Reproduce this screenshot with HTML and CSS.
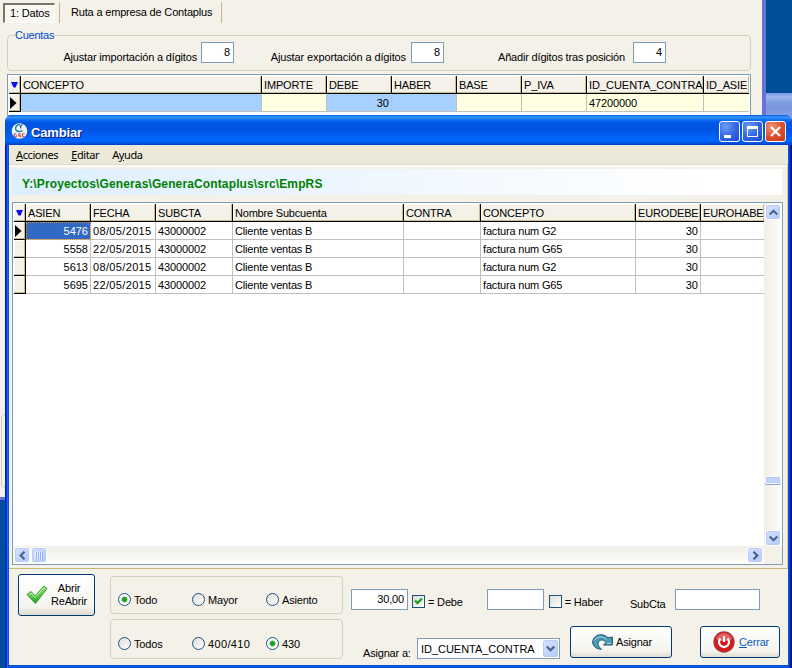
FILE: index.html
```html
<!DOCTYPE html>
<html lang="es">
<head>
<meta charset="utf-8">
<title>Cambiar</title>
<link rel="stylesheet" href="styles.css">
</head>
<body>
<div class="desktop">
  <div class="inactive-window"></div>

  <section class="back-window">
    <nav class="tabs">
      <span class="tab tab-active">1: Datos</span>
      <span class="tab tab-second">Ruta a empresa de Contaplus</span>
    </nav>
    <div class="cuentas">
      <span class="legend">Cuentas</span>
      <label class="field"><span>Ajustar importación a dígitos</span><b class="box">8</b></label>
      <label class="field"><span>Ajustar exportación a dígitos</span><b class="box">8</b></label>
      <label class="field"><span>Añadir dígitos tras posición</span><b class="box">4</b></label>
    </div>
    <div class="table table-top">
      <div class="row head cols-top">
        <span class="mark"><svg width="7" height="6"><path d="M0 0H7L4.500 5.500H2.500Z" fill="#0a0af0"/></svg></span>
        <span>CONCEPTO</span><span>IMPORTE</span><span>DEBE</span><span>HABER</span><span>BASE</span><span>P_IVA</span><span class="caps-wide">ID_CUENTA_CONTRA</span><span>ID_ASIE</span>
      </div>
      <div class="row cols-top tint">
        <span class="mark"><svg width="7" height="12"><path d="M0 0L6.500 6L0 12Z"/></svg></span>
        <span class="blue"></span><span></span><span class="blue num last-blue">30</span><span class="blue"></span><span></span><span></span><span class="digits">47200000</span><span></span>
      </div>
    </div>
    <div class="hidden-group"></div>
  </section>

  <section class="dialog">
    <header class="titlebar">
      <svg class="app-icon" width="17" height="17" viewBox="0 0 17 17"><circle cx="8.500" cy="8" r="7.800" fill="#f1f4f6"/><path d="M9 1.500C5.500 2 3.500 4.500 5 7c1.300 2 4.500 2 6.500.5" fill="none" stroke="#1686a8" stroke-width="1.500"/><path d="M11.500 1.500c-2 1-2.500 2.500-1.500 4" fill="none" stroke="#17449b" stroke-width="1.200"/><path d="M5.500 10.800H3.300v3h2.200v-1.500M9.700 10.800H7.500v1.500h2.200v1.500H7.500M13.700 10.800h-2.200v3h2.200" fill="none" stroke="#c04848" stroke-width="1"/></svg>
      <h1>Cambiar</h1>
      <span class="cap"><svg width="21" height="21"><path d="M5 14h7v3H5z" fill="#fff"/></svg></span>
      <span class="cap"><svg width="21" height="21"><path d="M5.500 5.500h10v10h-10z" fill="none" stroke="#fff"/><path d="M5 5h11v3H5z" fill="#fff"/></svg></span>
      <span class="cap cap-close"><svg width="21" height="21"><path d="M6 6l9 9M15 6l-9 9" stroke="#fff" stroke-width="2.200"/></svg></span>
    </header>
    <nav class="menu"><span><u>A</u>cciones</span><span><u>E</u>ditar</span><span>A<u>y</u>uda</span></nav>

    <div class="content">
      <div class="path">Y:\Proyectos\Generas\GeneraContaplus\src\EmpRS</div>
      <div class="table table-main">
        <div class="rows">
          <div class="row head cols-main">
            <span class="mark"><svg width="7" height="6"><path d="M0 0H7L4.500 5.500H2.500Z" fill="#0a0af0"/></svg></span>
            <span>ASIEN</span><span>FECHA</span><span>SUBCTA</span><span class="prose">Nombre Subcuenta</span><span>CONTRA</span><span>CONCEPTO</span><span>EURODEBE</span><span>EUROHABE</span>
          </div>
          <div class="row cols-main">
            <span class="mark"><svg width="7" height="12"><path d="M0 0L6.500 6L0 12Z"/></svg></span>
            <span class="num selected">5476</span><span class="date">08/05/2015</span><span class="digits">43000002</span><span>Cliente ventas B</span><span></span><span>factura num G2</span><span class="num">30</span><span></span>
          </div>
          <div class="row cols-main">
            <span class="mark"></span>
            <span class="num">5558</span><span class="date">22/05/2015</span><span class="digits">43000002</span><span>Cliente ventas B</span><span></span><span>factura num G65</span><span class="num">30</span><span></span>
          </div>
          <div class="row cols-main">
            <span class="mark"></span>
            <span class="num">5613</span><span class="date">08/05/2015</span><span class="digits">43000002</span><span>Cliente ventas B</span><span></span><span>factura num G2</span><span class="num">30</span><span></span>
          </div>
          <div class="row cols-main">
            <span class="mark"></span>
            <span class="num">5695</span><span class="date">22/05/2015</span><span class="digits">43000002</span><span>Cliente ventas B</span><span></span><span>factura num G65</span><span class="num">30</span><span></span>
          </div>
        </div>
        <div class="vscroll">
          <span class="sb"><svg width="9" height="7"><path d="M.7 5.500L4.500 1.700L8.300 5.500" /></svg></span>
          <span class="vthumb"></span>
          <span class="sb sb-end"><svg width="9" height="7"><path d="M.7 1.500L4.500 5.300L8.300 1.500" /></svg></span>
        </div>
        <div class="hscroll">
          <span class="sb"><svg width="7" height="9"><path d="M5.500 .7L1.700 4.500L5.500 8.300" /></svg></span>
          <span class="sb hthumb"><i></i></span>
          <span class="sb sb-end"><svg width="7" height="9"><path d="M1.500 .7L5.300 4.500L1.500 8.300" /></svg></span>
        </div>
      </div>
    </div>

    <footer class="panel">
      <button class="btn btn-open">
        <svg width="22" height="20" viewBox="0 0 22 20"><defs><linearGradient id="g" x1="0" y1="0" x2="0" y2="1"><stop offset="0" stop-color="#9be86a"/><stop offset="1" stop-color="#1fa82a"/></linearGradient></defs><path d="M1 9.500L5 6.500L9 11L18 1L21 3.500L9.500 18.500Z" fill="url(#g)" stroke="#3c9440"/><path d="M3 9.500L5 8L9 12.500L18 2.500" fill="none" stroke="#c9f5b0"/></svg>
        <span>Abrir<br>ReAbrir</span>
      </button>
      <div class="groups">
        <div class="group group-a"><label class="opt on"><i></i>Todo</label><label class="opt"><i></i>Mayor</label><label class="opt"><i></i>Asiento</label></div>
        <div class="group group-b"><label class="opt"><i></i>Todos</label><label class="opt"><i></i><span class="date">400/410</span></label><label class="opt on"><i></i>430</label></div>
      </div>
      <div class="controls">
        <div class="line line-a">
          <b class="box amount">30,00</b>
          <label class="check"><i><svg width="9" height="9"><path d="M1 3.500L3.500 6L8 1.500" fill="none" stroke="#21a121" stroke-width="2.400"/></svg></i>= Debe</label>
          <b class="box second"></b>
          <label class="check check-off"><i></i>= Haber</label>
          <span class="sub">SubCta</span>
          <b class="box third"></b>
        </div>
        <div class="line line-b">
          <span class="assign">Asignar a:</span>
          <span class="select"><span class="caps-wide">ID_CUENTA_CONTRA</span><span class="sb"><svg width="9" height="7"><path d="M.7 1.500L4.500 5.300L8.300 1.500" /></svg></span></span>
          <button class="btn btn-assign"><svg width="21" height="16" viewBox="0 0 21 16"><path d="M.7 8C1 3.500 4.500 .8 9 .8c3 0 5.200 1.200 6.800 3.200L20.300 3V11H11.500l2.700-2.500C12 5.500 8.500 5.200 6.800 7.500c-1.500 2.300-.3 5.500 2.700 7.800C4.500 15 .5 12 .7 8Z" fill="#4e9cb4" stroke="#17506e"/><path d="M2.500 6.500C5 2.300 10 1.300 14.500 5.500M15 9.500h4" fill="none" stroke="#a5d5e3"/></svg><span>Asignar</span></button>
          <button class="btn btn-close"><svg width="22" height="22" viewBox="0 0 22 22"><circle cx="11" cy="11" r="10" fill="#d8181c" stroke="#a53535" stroke-width="1.300"/><path d="M3 8a8.500 8.500 0 0 1 16 0c-5 3-11 3-16 0Z" fill="#f08888" opacity=".65"/><path d="M7.500 7.500a5 5 0 1 0 7 0M11 5v6" fill="none" stroke="#fff" stroke-width="2.200"/></svg><span><u>C</u>errar</span></button>
        </div>
      </div>
    </footer>
  </section>
</div>
</body>
</html>
```
FILE: styles.css
```css
* { box-sizing: border-box; }
body { margin: 0; font: 11px/17px "Liberation Sans", Arial, sans-serif; letter-spacing: -0.18px; color: #000; }
svg { display: block; }
b, i { font-weight: normal; font-style: normal; }
.desktop { position: relative; width: 792px; height: 668px; overflow: hidden; background: #004e98; }

.inactive-window { position: absolute; left: 766px; top: 93px; width: 26px; height: 60px; background: linear-gradient(#7b9be4, #9db4f0 4px, #809de0 9px, #7d97df 16px, #91a9e8 30px); }

/* window behind the dialog */
.back-window { position: absolute; left: 0; top: 0; width: 766px; height: 500px; background: #f4f1e8; border-right: 4px solid #6674d5; border-bottom: 3px solid #6070d0; }
.tabs { display: flex; height: 24px; padding: 3px 0 0 3px; }
.tab { height: 20px; line-height: 19px; }
.tab-active { width: 52px; padding-left: 5px; border: 1px solid #fff; border-top: 2px solid #77746a; border-left: 2px solid #77746a; background: #f9f7f2; line-height: 17px; }
.tab-second { width: 163px; height: 21px; margin: -1px 0 0 4px; padding-left: 11px; border-left: 1px solid #c1b589; border-right: 1px solid #c1b589; line-height: 20px; }

.cuentas { position: relative; display: grid; grid-template-columns: 226px 210px 223px; width: 744px; height: 36px; margin: 11px 0 0 7px; border: 1px solid #d0d0bf; border-radius: 4px; }
.legend { position: absolute; left: 7px; top: -9px; background: #f4f1e8; color: #0046d5; letter-spacing: -0.25px; }
.field { display: flex; justify-content: flex-end; gap: 4px; padding-top: 6px; }
.field span { padding-top: 7px; white-space: nowrap; }
.field:nth-of-type(2) { gap: 5px; letter-spacing: -0.12px; }
.field:nth-of-type(3) { gap: 8px; padding-right: 1px; }
.box { width: 33px; height: 21px; padding-right: 3px; background: #fff; border: 1px solid #7f9db9; text-align: right; line-height: 18px; }
.field .box { flex: none; }
.hidden-group { width: 20px; height: 74px; margin: 298px 0 0 1px; border: 1px solid #d0d0bf; border-radius: 4px; }

/* data grids */
.table { background: #fff; border: 1px solid #7f9db9; }
.table-top { width: 744px; height: 42px; margin: 3px 0 0 7px; padding: 1px; }
.row { display: grid; height: 18px; }
.row > span { overflow: hidden; padding-left: 2px; border-right: 1px solid #c0c0c0; border-bottom: 1px solid #c0c0c0; white-space: nowrap; line-height: 18px; }
.head > span { background: #f4f1e8; border-color: #000; box-shadow: inset -1px -1px #c9bd92, inset 1px 1px #fff; letter-spacing: -0.15px; line-height: 18px; }
.row > .mark { display: flex; align-items: center; justify-content: center; padding: 0 2px 0 0; background: #f4f1e8; border-color: #000; box-shadow: inset -1px -1px #c9bd92, inset 1px 1px #fff; }
.head > .mark { padding: 0; }
.row > span:last-child { border-right: 0; }
.cols-top { grid-template-columns: 12px 241px 65px 65px 65px 65px 65px 117px 45px; }
.cols-main { grid-template-columns: 12px 65px 65px 77px 171px 77px 155px 65px 63px; }
.tint > span { background-color: #ffffe1; }
.tint > .blue { background: #a6d0ff; }
.row > .num { padding: 0 2px 0 0; text-align: right; letter-spacing: 0; }
.row > .last-blue { border-right-color: #b5c4d8; }
.caps-wide, .head > .caps-wide { letter-spacing: -0.03px; }
.date { letter-spacing: 0.35px; }
.digits { letter-spacing: -0.1px; }
.head > .prose { letter-spacing: -0.2px; }
.row > .selected { background: #316ac5; color: #fff; outline: 1px dotted #e08a28; outline-offset: -1px; }

/* dialog */
.dialog { position: absolute; left: 5px; top: 115px; width: 787px; height: 553px; padding: 0 4px 3px; border-radius: 7px 7px 0 0; background: linear-gradient(90deg, #0019cf 0 1px, #0831d9 1px 2px, #166aee 2px 3px, #0855dd 3px 4px, #0855dd 4px 783px, #0855dd 783px 784px, #0441d8 784px 785px, #001ea0 785px 786px, #00138c 786px); }
.titlebar { display: flex; align-items: flex-start; height: 30px; margin: 0 -4px; padding: 6px 6px 0; border-radius: 7px 7px 0 0; background: linear-gradient(#0058e6 0, #3a93ff 2px, #288eff 3px, #0c6cf0 5px, #0055e5 8px, #0054e3 15px, #0060f5 21px, #0066ff 26px, #005df0 27px, #003dc0 30px); }
.app-icon { margin-top: 2px; }
.titlebar h1 { flex: 1; margin: 3px 0 0 3px; color: #fff; font: bold 13px/17px "Liberation Sans", Arial, sans-serif; letter-spacing: -0.15px; text-shadow: 1px 1px #0a1883; }
.cap { width: 21px; height: 21px; margin-left: 2px; border: 1px solid #fff; border-radius: 3px; background: radial-gradient(circle at 30% 25%, #6d9cf5, #3468e0 50%, #1d49cf); }
.cap svg { margin: -1px; }
.cap-close { background: radial-gradient(circle at 30% 25%, #f0957a, #dd5030 50%, #c33818); }
.menu { display: flex; gap: 13px; height: 19px; padding: 1px 7px 0; background: #ece9d8; font: 11px/17px "Noto Sans", Tahoma, sans-serif; letter-spacing: -0.4px; }
.content { height: 405px; padding: 4px 5px 0 3px; background: #f4f1e8; border-top: 1px solid #dedac8; border-bottom: 1px solid #c5b67c; border-right: 1px solid #d4c9a0; box-shadow: inset 0 2px #fcfbf7; }
.path { height: 26px; padding-left: 10px; background: linear-gradient(90deg, #ddeeff, #fff 90%); color: #008000; font: bold 12px/31px "Liberation Sans", Arial, sans-serif; letter-spacing: 0.13px; }
.table-main { display: grid; grid-template: 343px 18px / 751px 18px; width: 771px; height: 363px; margin-top: 7px; overflow: hidden; background: linear-gradient(#f4f1e8, #f4f1e8) 100% 100% / 18px 18px no-repeat #fff; }
.rows { padding: 1px 0 0 1px; }
.vscroll, .hscroll { display: flex; }
.vscroll { flex-direction: column; padding: 1px 1px 0; background: linear-gradient(90deg, #efeee6, #fefefb); }
.hscroll { gap: 1px; padding: 1px 0 1px 1px; background: linear-gradient(#efeee6, #fefefb); }
.sb { display: flex; flex: none; align-items: center; justify-content: center; width: 16px; height: 16px; border: 1px solid #fff; border-radius: 3px; background: linear-gradient(135deg, #d6e2ff, #b3c9fa); box-shadow: inset 0 0 0 1px #b9cbf3; }
.sb path { fill: none; stroke: #4d6185; stroke-width: 2.200; }
.vscroll .sb-end { margin-top: auto; }
.hscroll .sb-end { margin-left: auto; margin-right: 1px; }
.vthumb { height: 8px; margin-top: 256px; border: 1px solid #fff; border-radius: 2px; background: #c2d3fc; box-shadow: inset 0 0 0 1px #b5c8f5, 0 1px #85a4d8; }
.hthumb i { width: 8px; height: 7px; background: repeating-linear-gradient(90deg, #eef4ff 0 1px, #8cb0f8 1px 2px); }

/* bottom panel */
.panel { display: flex; height: 96px; padding-left: 9px; background: #f4f1e8; }
.btn { display: flex; align-items: center; padding: 0; border: 1px solid #003c74; border-radius: 3px; background: linear-gradient(#fff, #f4f3ee 80%, #dfdbd0); color: #000; font: inherit; letter-spacing: inherit; }
.btn-open { width: 77px; height: 42px; margin-top: 5px; padding-left: 7px; line-height: 13px; }
.btn-open span { width: 38px; margin-left: 2px; text-align: center; white-space: nowrap; }
.groups { width: 233px; margin-left: 15px; padding-top: 7px; }
.group { display: grid; grid-template-columns: 74px 74px 1fr; padding-left: 7px; border: 1px solid #d0d0bf; border-radius: 4px; }
.group-a { height: 38px; padding-top: 16px; }
.group-b { height: 40px; margin-top: 5px; padding-top: 17px; }
.opt { display: flex; align-items: flex-start; height: 13px; line-height: 15px; }
.opt i { width: 13px; height: 13px; margin-right: 3px; border: 1px solid #1d5281; border-radius: 50%; background: linear-gradient(135deg, #dcdcd7, #fff); }
.opt.on i { background: radial-gradient(circle, #21a121 0 2px, #55c255 2.500px, #fff 3.500px); }
.controls { flex: 1; padding: 20px 0 0 8px; }
.line { display: flex; }
.box.amount { width: 57px; }
.box.second { width: 57px; margin-left: 24px; }
.box.third { width: 85px; margin-left: 10px; }
.check { display: flex; height: 13px; margin: 6px 0 0 4px; line-height: 14px; }
.check i { width: 13px; height: 13px; margin-right: 3px; padding: 1px; border: 1px solid #1c5180; background: linear-gradient(135deg, #dcdcd7, #fff); }
.check-off { margin-left: 5px; }
.sub { width: 35px; margin: 7px 0 0 27px; }
.line-b { margin-top: 13px; }
.assign { width: 54px; margin: 19px 0 0 12px; white-space: nowrap; }
.select { display: flex; justify-content: space-between; width: 143px; height: 21px; margin-top: 12px; padding: 1px 0 0 3px; background: #fff; border: 1px solid #7f9db9; line-height: 18px; }
.select .sb { height: 17px; border-width: 0 1px 0 0; }
.btn-assign { width: 102px; height: 32px; margin-left: 10px; padding-left: 21px; gap: 3px; }
.btn-close { width: 80px; height: 32px; margin-left: 28px; padding-left: 12px; gap: 4px; color: #0b5cb5; }
```
